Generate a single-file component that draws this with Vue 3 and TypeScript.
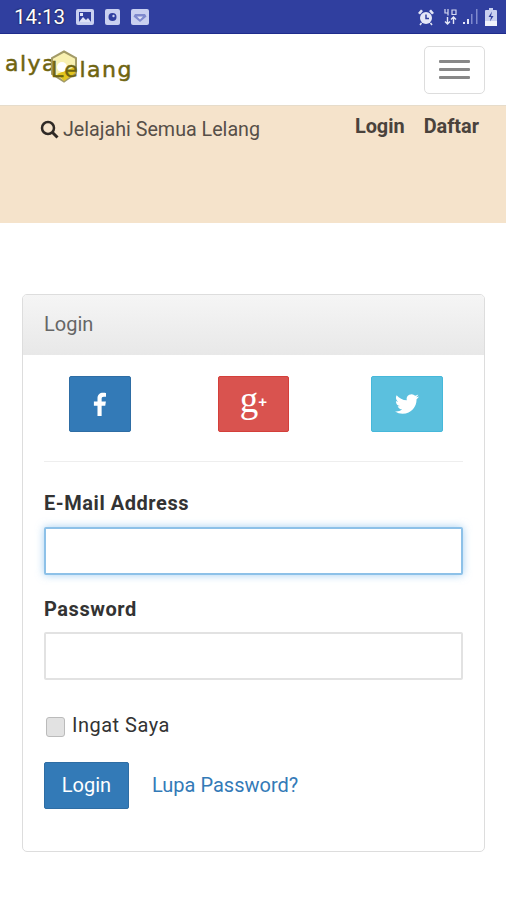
<template>
  <div class="page">
    <div class="status-bar">
      <div class="status-left">
        <span class="time">14:13</span>
        <svg class="note" width="18" height="16" viewBox="0 0 18 16">
          <rect width="18" height="16" rx="2" fill="#c9d0f0" />
          <rect x="3" y="3" width="12" height="10" fill="#303f9f" />
          <path d="M3 13l4-5 3 3 2-2 3 4z" fill="#dfe3f7" />
          <rect x="4" y="4" width="3" height="3" fill="#dfe3f7" />
        </svg>
        <svg class="note" width="15" height="16" viewBox="0 0 15 16">
          <rect width="15" height="16" rx="2" fill="#c9d0f0" />
          <circle cx="7.5" cy="8" r="4" fill="#303f9f" />
          <circle cx="8.5" cy="7" r="1.2" fill="#c9d0f0" />
        </svg>
        <svg class="note" width="18" height="16" viewBox="0 0 18 16">
          <rect width="18" height="16" rx="2" fill="#c9d0f0" />
          <path d="M4 5h10l1.5 2.500L9 13 2.500 7.500z" fill="#7f8ace" />
          <path d="M6 7.500h6L9 10.500z" fill="#dfe3f7" />
        </svg>
      </div>
      <div class="status-right">
        <svg width="18" height="18" viewBox="0 0 18 18">
          <circle cx="9" cy="10" r="6" fill="#e4e7f7" />
          <path d="M9 6.500V10.500H12" stroke="#303f9f" stroke-width="1.500" fill="none" />
          <path d="M1 5l3-3.500 2 1.500L3 6.500zM17 5l-3-3.500-2 1.500 3 3.500z" fill="#e4e7f7" />
          <path d="M4.500 15l-1.500 2M13.500 15l1.500 2" stroke="#e4e7f7" stroke-width="1.500" />
        </svg>
        <svg width="13" height="17" viewBox="0 0 13 17">
          <path d="M1 1v4h3M4 1v6.500M8 4V2H12V6.500H10M8 2V6.500H12" stroke="#d5d9f2" stroke-width="1.200" fill="none" />
          <path d="M3.500 9v7M1 13.500l2.500 2.500 2.500-2.500M9.500 16V9M7 11.500L9.500 9l2.500 2.500" stroke="#e4e7f7" stroke-width="1.400" fill="none" />
        </svg>
        <svg width="16" height="17" viewBox="0 0 16 17">
          <rect x="0" y="14" width="2" height="2" fill="#e4e7f7" />
          <rect x="4" y="11" width="2" height="5" fill="#e4e7f7" />
          <rect x="8" y="6" width="1.500" height="10" fill="#7f8ace" />
          <rect x="13" y="1" width="1.500" height="15" fill="#7f8ace" />
        </svg>
        <svg width="12" height="18" viewBox="0 0 12 18">
          <rect x="4" y="0" width="4" height="2" fill="#c9d0f0" />
          <rect x="0" y="2" width="12" height="16" rx="1" fill="#c9d0f0" />
          <rect x="0" y="13" width="12" height="5" fill="#f0f2fb" />
          <path d="M7 3.500L3.500 9H6l-1 4.500L8.500 8H6z" fill="#303f9f" />
        </svg>
      </div>
    </div>

    <nav class="navbar">
      <a class="logo">
        <span class="logo-a">alya</span>
        <svg class="logo-hex" width="28" height="33" viewBox="0 0 28 33">
          <path d="M14 1.500L26 8v15l-12 8.500L2 24V8z" fill="#f8f0b0" stroke="#a39b68" stroke-width="2" />
          <path d="M7 24l7 7 11-8v-6z" fill="#e3c51f" />
          <circle cx="12" cy="17" r="5" fill="#fff" />
        </svg>
        <span class="logo-b">Lelang</span>
      </a>
      <button class="toggle" type="button">
        <span v-for="n in 3" :key="n" class="toggle-bar"></span>
      </button>
    </nav>

    <div class="band">
      <a class="browse">
        <svg width="19" height="19" viewBox="0 0 19 19">
          <circle cx="8" cy="8" r="6" fill="none" stroke="#2f2a26" stroke-width="2.500" />
          <path d="M12.500 12.500L17.500 17.500" stroke="#2f2a26" stroke-width="3" />
        </svg>
        Jelajahi Semua Lelang
      </a>
      <div class="auth">
        <a>Login</a>
        <a>Daftar</a>
      </div>
    </div>

    <section class="card">
      <div class="card-head">Login</div>
      <div class="card-body">
        <div class="socials">
          <a class="social fb">
            <svg width="16" height="24" viewBox="6 1 12 22">
              <path d="M13.500 23v-9.500h3.300l.6-3.900h-3.900V7.300c0-1.100.4-1.900 2-1.900h2V1.900C17.100 1.800 16 1.700 14.800 1.700c-3 0-5.100 1.800-5.100 5.200v2.700H6.400v3.900h3.300V23z" fill="#fff" />
            </svg>
          </a>
          <a class="social gp"><span class="g">g</span><span class="plus">+</span></a>
          <a class="social tw">
            <svg width="24" height="24" viewBox="0 0 24 24">
              <path d="M23.950 4.570a10 10 0 01-2.820.780 4.960 4.960 0 002.160-2.730c-.950.560-2 .960-3.130 1.190a4.920 4.920 0 00-8.380 4.480C7.690 8.100 4.070 6.130 1.640 3.160a4.820 4.820 0 00-.670 2.480c0 1.710.870 3.210 2.190 4.100a4.900 4.900 0 01-2.230-.620v.060a4.920 4.920 0 003.950 4.830 5 5 0 01-2.210.080 4.940 4.940 0 004.600 3.420 9.870 9.870 0 01-6.100 2.100c-.390 0-.780-.020-1.170-.060a14 14 0 007.560 2.210c9.050 0 14-7.500 14-13.990 0-.210 0-.420-.020-.630A9.940 9.940 0 0024 4.590z" fill="#fff" />
            </svg>
          </a>
        </div>
        <hr class="divider" />
        <label class="field-label">E-Mail Address</label>
        <input class="field focused" type="text" />
        <label class="field-label second">Password</label>
        <input class="field" type="password" />
        <label class="remember">
          <input class="check" type="checkbox" />
          <span>Ingat Saya</span>
        </label>
        <div class="actions">
          <button class="submit" type="button">Login</button>
          <a class="forgot">Lupa Password?</a>
        </div>
      </div>
    </section>
  </div>
</template>

<script setup lang="ts">
</script>

<style>
html,
body {
  margin: 0;
  background: #fff;
}
</style>

<style scoped>
.page {
  width: 506px;
  height: 900px;
  overflow: hidden;
  background: #fff;
  font-family: Roboto, "Liberation Sans", sans-serif;
  color: #333;
}

.status-bar {
  height: 33px;
  box-sizing: content-box;
  border-bottom: 1px solid #1f2c8c;
  background: #303f9f;
  display: flex;
  align-items: center;
  justify-content: space-between;
  padding: 0 9px 0 14px;
}
.status-left,
.status-right {
  display: flex;
  align-items: center;
}
.status-left {
  gap: 11px;
}
.status-right {
  gap: 6px;
}
.time {
  font-size: 20.500px;
  color: #fff;
  text-shadow: 0 0 2px #111;
}
.status-right svg:first-child {
  margin-right: 3px;
}

.navbar {
  height: 71px;
  display: flex;
  align-items: center;
  justify-content: space-between;
  padding: 0 21px 0 5px;
}
.logo {
  position: relative;
  display: flex;
  font-family: "DejaVu Sans", sans-serif;
  font-size: 22px;
  letter-spacing: 1.500px;
  -webkit-text-stroke: 0.5px #6f6410;
  color: #6f6410;
  width: 130px;
  height: 40px;
}
.logo-a {
  margin-top: 1px;
}
.logo-b {
  position: absolute;
  left: 46px;
  top: 7px;
}
.logo-hex {
  position: absolute;
  left: 45px;
  top: 0;
}
.toggle {
  width: 61px;
  height: 48px;
  border: 1px solid #ddd;
  border-radius: 5px;
  background: #fff;
  display: flex;
  flex-direction: column;
  align-items: center;
  justify-content: center;
  gap: 5px;
  padding: 0;
}
.toggle-bar {
  width: 31px;
  height: 3px;
  border-radius: 1px;
  background: #888;
}

.band {
  height: 118px;
  box-sizing: border-box;
  border-top: 1px solid #e6dccb;
  background: #f5e3cb;
  display: flex;
  align-items: flex-start;
  justify-content: space-between;
  padding: 12px 27px 0 40px;
}
.browse {
  display: flex;
  align-items: center;
  gap: 4px;
  font-size: 19.700px;
  color: #574f48;
}
.auth {
  display: flex;
  gap: 19px;
  font-size: 19.900px;
  font-weight: 700;
  color: #4a423c;
  margin-top: -3px;
}

.card {
  margin: 71px 21px 0 22px;
  height: 558px;
  box-sizing: border-box;
  border: 1px solid #ddd;
  border-radius: 5px;
  overflow: hidden;
}
.card-head {
  height: 60px;
  box-sizing: border-box;
  padding: 17px 21px 0;
  font-size: 20px;
  color: #666;
  background: linear-gradient(#f5f5f5, #e8e8e8);
}
.card-body {
  padding: 21px 21px 0;
}
.socials {
  display: flex;
  height: 56px;
}
.social {
  height: 56px;
  box-sizing: border-box;
  border-radius: 2px;
  display: flex;
  align-items: center;
  justify-content: center;
  color: #fff;
}
.fb {
  width: 62px;
  margin-left: 25px;
  background: #337ab7;
  border: 1px solid #2e6da4;
}
.gp {
  width: 71px;
  margin-left: 87px;
  background: #d9534f;
  border: 1px solid #d43f3a;
}
.tw {
  width: 72px;
  margin-left: 82px;
  background: #5bc0de;
  border: 1px solid #46b8da;
}
.g {
  font-family: "Liberation Serif", serif;
  font-size: 37px;
  line-height: 1;
  margin-top: -10px;
}
.plus {
  font-family: "Liberation Sans", sans-serif;
  font-size: 15px;
  font-weight: 700;
  margin-top: -6px;
}

.divider {
  margin: 29px 0 28px;
  border: 0;
  border-top: 1px solid #eee;
}
.field-label {
  display: block;
  font-size: 20px;
  font-weight: 700;
  letter-spacing: 0.550px;
  line-height: 26px;
  margin-bottom: 11px;
  color: #333;
}
.field-label.second {
  margin-top: 21px;
  margin-bottom: 10px;
}
.field {
  display: block;
  width: 100%;
  height: 48px;
  box-sizing: border-box;
  border: 2px solid #e2e2e2;
  border-radius: 2px;
  background: #fff;
  outline: none;
  padding: 0;
}
.focused {
  border-color: #8dc1e8;
  box-shadow: 0 0 8px rgba(102, 175, 233, 0.6);
}

.remember {
  display: flex;
  align-items: center;
  gap: 7px;
  margin: 33px 0 0 2px;
  font-size: 20px;
  letter-spacing: 0.500px;
  color: #333;
}
.check {
  appearance: none;
  width: 19px;
  height: 20px;
  margin: 3px 0 0;
  border: 1px solid #bbb;
  border-radius: 3px;
  background: #e2e2e2;
}

.actions {
  display: flex;
  align-items: center;
  gap: 23px;
  margin-top: 25px;
}
.submit {
  width: 85px;
  height: 47px;
  border: 1px solid #2e6da4;
  border-radius: 2px;
  background: #337ab7;
  color: #fff;
  font-family: inherit;
  font-size: 20px;
  padding: 0 0 2px;
}
.forgot {
  font-size: 20px;
  color: #337ab7;
  margin-top: -2px;
}
</style>
